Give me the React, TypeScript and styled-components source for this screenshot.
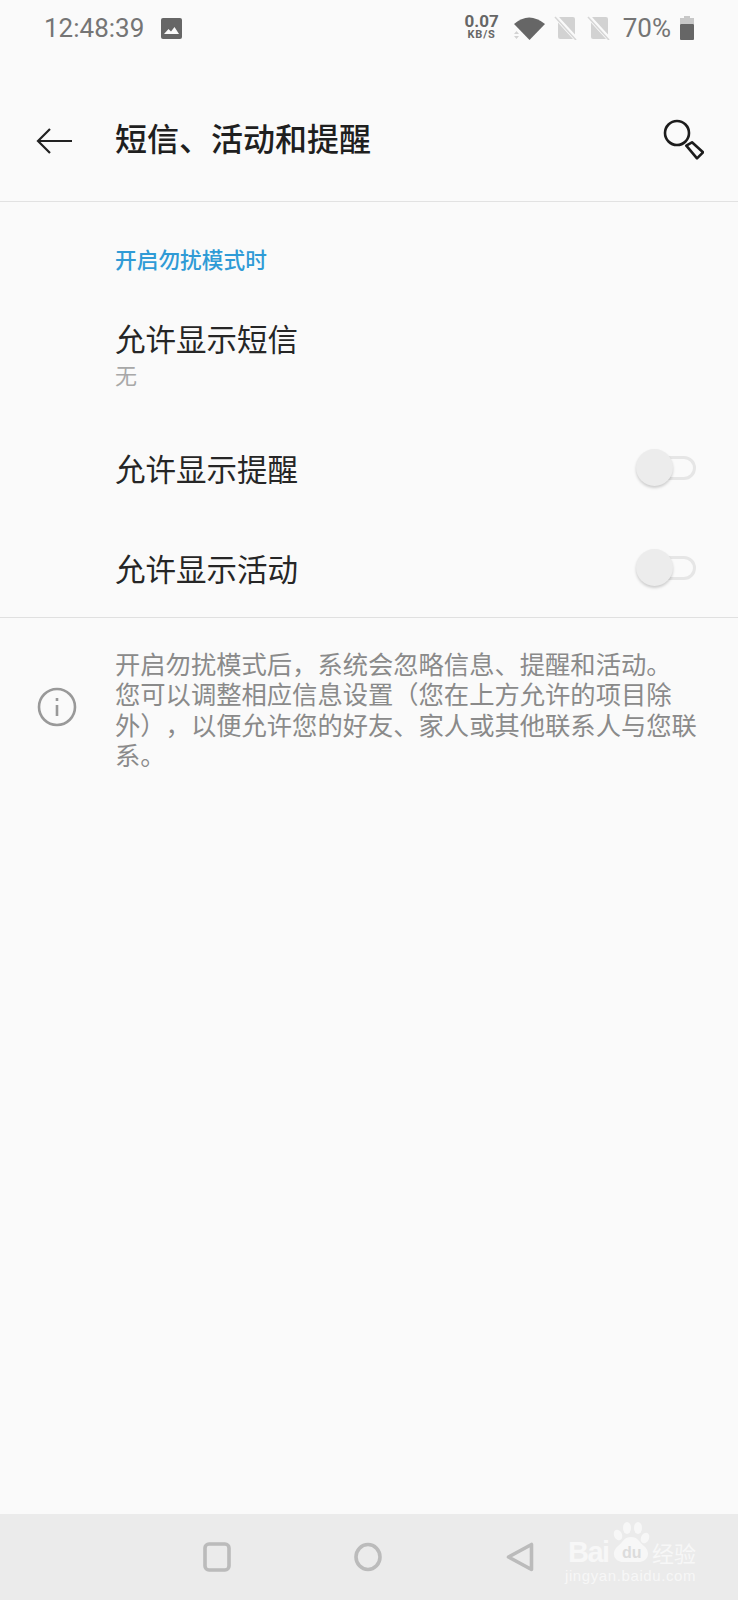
import React, { ReactElement } from 'react';
import styled, { createGlobalStyle } from 'styled-components';

const FONT = `"Noto Sans CJK SC", "Noto Sans", sans-serif`;

const INFO_LINES = [
  '开启勿扰模式后，系统会忽略信息、提醒和活动。',
  '您可以调整相应信息设置（您在上方允许的项目除',
  '外），以便允许您的好友、家人或其他联系人与您联',
  '系。',
];

function Toggle(): ReactElement {
  return (
    <ToggleBlock>
      <ToggleTrack />
      <ToggleKnob />
    </ToggleBlock>
  );
}

function SimIcon(): ReactElement {
  return (
    <svg width="24" height="24" viewBox="0 0 24 24">
      <rect x="4" y="1" width="17" height="22" rx="2" fill="#d2d2d2" />
      <path d="M1 0l22 24" stroke="#fafafa" strokeWidth="4.500" />
      <path d="M1 1l21 23" stroke="#d6d6d6" strokeWidth="1.500" />
    </svg>
  );
}

function StatusBar(): ReactElement {
  return (
    <StatusBarBlock>
      <StatusGroup>
        <Clock>12:48:39</Clock>
        <svg width="21" height="21" viewBox="0 0 21 21">
          <rect width="21" height="21" rx="2" fill="#666" />
          <path d="M3 16l4.500-5 2.500 2.500 3.500-4.500 4.500 7z" fill="#fafafa" />
        </svg>
      </StatusGroup>
      <StatusGroup>
        <Speed>
          <SpeedValue>0.07</SpeedValue>
          <SpeedUnit>KB/S</SpeedUnit>
        </Speed>
        <WifiIcon width="33" height="26" viewBox="0 0 33 26">
          <path d="M1 9Q16-4 32 9L16.500 25z" fill="#666" />
          <path d="M1 19l2.500-3 2.500 3zM1 21l2.500 3 2.500-3z" fill="#d2d2d2" />
        </WifiIcon>
        <SimGroup>
          <SimIcon />
          <SimIcon />
        </SimGroup>
        <Battery>70%</Battery>
        <svg width="14" height="24" viewBox="0 0 14 24">
          <path d="M4 0h6v2h4v6H0V2h4z" fill="#c8c8c8" />
          <rect y="8" width="14" height="16" rx="1" fill="#666" />
        </svg>
      </StatusGroup>
    </StatusBarBlock>
  );
}

function App(): ReactElement {
  return (
    <Page>
      <GlobalStyle />
      <StatusBar />
      <Header>
        <BackSlot>
          <svg width="38" height="28" viewBox="0 0 38 28" fill="none" stroke="#222" strokeWidth="2.200">
            <path d="M37 14H3M15 2L3 14l12 12" />
          </svg>
        </BackSlot>
        <Title>短信、活动和提醒</Title>
        <svg width="42" height="42" viewBox="0 0 42 42" fill="none" stroke="#1c1c1c" strokeWidth="2.600">
          <circle cx="15" cy="15" r="12" />
          <path d="M24.300 27.700l5.700-3.400 11 10-6 6z" strokeLinejoin="round" />
        </svg>
      </Header>
      <Content>
        <SectionTitle>开启勿扰模式时</SectionTitle>
        <MessageRow>
          <RowLabel>允许显示短信</RowLabel>
          <RowValue>无</RowValue>
        </MessageRow>
        <ToggleRow>
          <RowLabel>允许显示提醒</RowLabel>
          <Toggle />
        </ToggleRow>
        <ToggleRow>
          <RowLabel>允许显示活动</RowLabel>
          <Toggle />
        </ToggleRow>
      </Content>
      <InfoBlock>
        <InfoIconSlot>
          <svg width="40" height="40" viewBox="0 0 40 40" fill="none" stroke="#999" strokeWidth="2.600">
            <circle cx="20" cy="20" r="18" />
            <path d="M20 18v11M20 11v3" />
          </svg>
        </InfoIconSlot>
        <InfoText>
          {INFO_LINES.map((line) => (
            <InfoLine key={line}>{line}</InfoLine>
          ))}
        </InfoText>
      </InfoBlock>
      <Spacer />
      <NavBar>
        <svg width="28" height="30" viewBox="0 0 28 30" fill="none" stroke="#bbb" strokeWidth="3.600">
          <rect x="2" y="2" width="24" height="26" rx="4" />
        </svg>
        <svg width="28" height="30" viewBox="0 0 28 30" fill="none" stroke="#bbb" strokeWidth="3.600">
          <ellipse cx="14" cy="15" rx="12" ry="12.500" />
        </svg>
        <BackNav width="28" height="30" viewBox="0 0 28 30" fill="none" stroke="#bbb" strokeWidth="3.600" strokeLinejoin="round">
          <path d="M25.500 2.500v25L2.500 15z" />
        </BackNav>
        <Watermark>
          <PawIcon width="150" height="80" viewBox="0 0 150 80">
            <g fill="#f7f7f7">
              <ellipse cx="63" cy="20" rx="4" ry="5.500" transform="rotate(-25 63 20)" />
              <ellipse cx="72" cy="13" rx="4" ry="6" />
              <ellipse cx="83" cy="13" rx="4" ry="6" />
              <ellipse cx="90" cy="23" rx="4" ry="5.500" transform="rotate(25 90 23)" />
              <path d="M76 22c7 0 8 5 13 9 8 7 3 16-5 16H68c-8 0-13-9-5-16 5-4 6-9 13-9z" />
            </g>
          </PawIcon>
          <WatermarkBai>Bai</WatermarkBai>
          <WatermarkDu>du</WatermarkDu>
          <WatermarkCn>经验</WatermarkCn>
          <WatermarkUrl>jingyan.baidu.com</WatermarkUrl>
        </Watermark>
      </NavBar>
    </Page>
  );
}

const GlobalStyle = createGlobalStyle`
  html, body {
    margin: 0;
    padding: 0;
    background: #fafafa;
  }
`;

const Page = styled.div`
  width: 738px;
  height: 1600px;
  display: flex;
  flex-direction: column;
  background: #fafafa;
  font-family: ${FONT};
  overflow: hidden;
`;

const StatusBarBlock = styled.div`
  height: 56px;
  display: flex;
  align-items: center;
  justify-content: space-between;
  padding: 0 44px;
  color: #666;
`;

const StatusGroup = styled.div`
  display: flex;
  align-items: center;
`;

const Clock = styled.span`
  font-family: Roboto, sans-serif;
  font-size: 26px;
  width: 117px;
  color: #757575;
`;

const Speed = styled.div`
  display: flex;
  flex-direction: column;
  align-items: center;
  font-family: Roboto, sans-serif;
  font-weight: 700;
  margin: 0 14px 4px 0;
`;

const SpeedValue = styled.span`
  font-size: 17px;
  line-height: 17px;
`;

const SpeedUnit = styled.span`
  font-size: 11px;
  line-height: 10px;
  letter-spacing: 0.8px;
`;

const WifiIcon = styled.svg`
  margin-right: 8px;
`;

const SimGroup = styled.div`
  display: flex;
  gap: 9px;
  margin-right: 12px;
`;

const Battery = styled.span`
  font-family: Roboto, sans-serif;
  font-size: 26px;
  margin-right: 9px;
  color: #757575;
`;

const Header = styled.header`
  height: 146px;
  box-sizing: border-box;
  padding: 20px 34px 0 0;
  display: flex;
  align-items: center;
  border-bottom: 1px solid #e2e2e2;
`;

const BackSlot = styled.div`
  width: 115px;
  flex-shrink: 0;
  padding: 4px 0 0 35px;
  box-sizing: border-box;
  display: flex;
  align-items: center;
`;

const Title = styled.h1`
  flex: 1;
  margin: 0 0 3px;
  font-size: 32px;
  font-weight: 500;
  line-height: 44px;
  color: #1f1f1f;
`;

const Content = styled.main`
  padding: 42px 0 0 115px;
  border-bottom: 1px solid #e0e0e0;
`;

const SectionTitle = styled.h2`
  margin: 0;
  font-size: 21.700px;
  font-weight: 500;
  line-height: 30px;
  color: #2f9bd6;
`;

const MessageRow = styled.div`
  display: flex;
  flex-direction: column;
  margin: 43px 0 29px;
`;

const RowLabel = styled.span`
  font-size: 30.500px;
  line-height: 42px;
  color: #262626;
`;

const RowValue = styled.span`
  font-size: 22px;
  line-height: 30px;
  color: #a8a8a8;
`;

const ToggleRow = styled.div`
  height: 100px;
  display: flex;
  align-items: center;
  justify-content: space-between;
  padding-right: 42px;
  &:last-child {
    margin-bottom: -1px;
  }
`;

const ToggleBlock = styled.div`
  position: relative;
  width: 60px;
  height: 38px;
`;

const ToggleTrack = styled.div`
  position: absolute;
  top: 7px;
  left: 4px;
  right: 0;
  height: 24px;
  box-sizing: border-box;
  border: 3px solid #e6e6e6;
  border-radius: 12px;
`;

const ToggleKnob = styled.div`
  position: absolute;
  top: 0;
  left: 0;
  width: 37px;
  height: 37px;
  border-radius: 50%;
  background: #ececec;
  box-shadow: 0 2px 3px rgba(0, 0, 0, 0.18);
`;

const InfoBlock = styled.section`
  display: flex;
  align-items: center;
  padding: 30px 0 0;
`;

const InfoIconSlot = styled.div`
  width: 115px;
  flex-shrink: 0;
  padding: 0 0 4px 37px;
  box-sizing: border-box;
  display: flex;
  align-items: center;
`;

const InfoText = styled.p`
  margin: 0;
  font-size: 25.300px;
  line-height: 30.300px;
  color: #8a8a8a;
  text-spacing-trim: space-all;
  white-space: nowrap;
`;

const InfoLine = styled.span`
  display: block;
`;

const Spacer = styled.div`
  flex: 1;
`;

const NavBar = styled.nav`
  position: relative;
  height: 86px;
  display: flex;
  align-items: center;
  background: #ebebeb;
  padding-left: 203px;
  gap: 123px;
`;

const BackNav = styled.svg`
  margin-left: 1px;
`;

const Watermark = styled.div`
  position: absolute;
  left: 555px;
  top: 1px;
  width: 150px;
  height: 80px;
  color: #f7f7f7;
`;

const PawIcon = styled.svg`
  position: absolute;
  top: 0;
  left: 0;
`;

const WatermarkBai = styled.span`
  position: absolute;
  top: 22px;
  left: 13px;
  font-family: "Liberation Sans", sans-serif;
  font-size: 29px;
  font-weight: 700;
  line-height: 30px;
  letter-spacing: -1.500px;
`;

const WatermarkDu = styled.span`
  position: absolute;
  top: 29px;
  left: 67px;
  font-family: "Liberation Sans", sans-serif;
  font-size: 16px;
  font-weight: 700;
  line-height: 18px;
  color: #dcdcdc;
`;

const WatermarkCn = styled.span`
  position: absolute;
  top: 22px;
  left: 97px;
  font-size: 22px;
  line-height: 30px;
  white-space: nowrap;
`;

const WatermarkUrl = styled.span`
  position: absolute;
  top: 53px;
  left: 10px;
  white-space: nowrap;
  font-family: "Liberation Sans", sans-serif;
  font-size: 15px;
  line-height: 16px;
  letter-spacing: 0.600px;
`;

export default App;
